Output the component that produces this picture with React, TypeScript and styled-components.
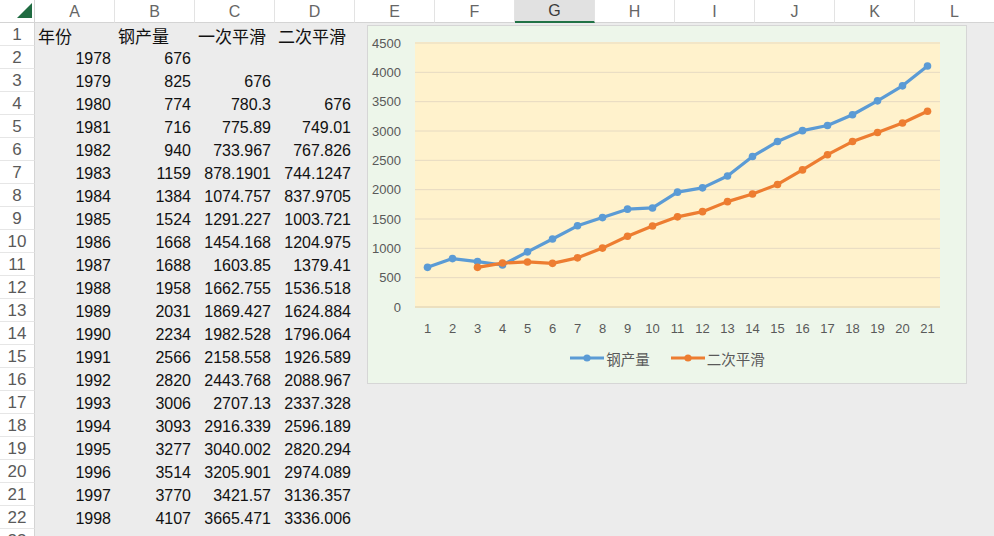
import styled, { createGlobalStyle } from "styled-components";

const GlobalStyle = createGlobalStyle`
  html, body {
    margin: 0;
    background: #ececec;
    overflow: hidden;
  }
  body {
    font-family: "Liberation Sans", "Noto Sans CJK SC", sans-serif;
  }
`;

const COLS = ["A", "B", "C", "D", "E", "F", "G", "H", "I", "J", "K", "L"];

const rows: string[][] = [
  ["年份", "钢产量", "一次平滑", "二次平滑"],
  ["1978", "676", "", ""],
  ["1979", "825", "676", ""],
  ["1980", "774", "780.3", "676"],
  ["1981", "716", "775.89", "749.01"],
  ["1982", "940", "733.967", "767.826"],
  ["1983", "1159", "878.1901", "744.1247"],
  ["1984", "1384", "1074.757", "837.9705"],
  ["1985", "1524", "1291.227", "1003.721"],
  ["1986", "1668", "1454.168", "1204.975"],
  ["1987", "1688", "1603.85", "1379.41"],
  ["1988", "1958", "1662.755", "1536.518"],
  ["1989", "2031", "1869.427", "1624.884"],
  ["1990", "2234", "1982.528", "1796.064"],
  ["1991", "2566", "2158.558", "1926.589"],
  ["1992", "2820", "2443.768", "2088.967"],
  ["1993", "3006", "2707.13", "2337.328"],
  ["1994", "3093", "2916.339", "2596.189"],
  ["1995", "3277", "3040.002", "2820.294"],
  ["1996", "3514", "3205.901", "2974.089"],
  ["1997", "3770", "3421.57", "3136.357"],
  ["1998", "4107", "3665.471", "3336.006"],
  ["", "", "", ""],
];

const Sheet = styled.div`
  position: relative;
  display: grid;
  grid-template-columns: 35px repeat(12, 80px);
  grid-template-rows: 23px;
  grid-auto-rows: 23px;
  width: 995px;
`;

const Corner = styled.div`
  background: #fff;
  border-right: 1px solid #d4d4d4;
  border-bottom: 1px solid #d4d4d4;
  box-sizing: border-box;
  display: flex;
  align-items: flex-end;
  justify-content: flex-end;
  padding: 0 2px 4px 0;
`;

const ColHead = styled.div<{ $active?: boolean }>`
  background: ${(p) => (p.$active ? "#e1e1e1" : "#fff")};
  border-right: 1px solid #e3e3e3;
  border-bottom: ${(p) => (p.$active ? "2px solid #217346" : "1px solid #d4d4d4")};
  box-sizing: border-box;
  display: flex;
  align-items: center;
  justify-content: center;
  font-size: 16px;
  color: ${(p) => (p.$active ? "#3a3a3a" : "#666")};
  padding-top: 1px;
`;

const RowHead = styled.div`
  background: #fff;
  border-right: 1px solid #d4d4d4;
  border-bottom: 1px solid #e6e6e6;
  box-sizing: border-box;
  display: flex;
  align-items: center;
  justify-content: center;
  font-size: 17px;
  color: #5a5a5a;
  padding-top: 2px;
`;

const Cell = styled.div<{ $left?: boolean }>`
  display: flex;
  align-items: center;
  justify-content: ${(p) => (p.$left ? "flex-start" : "flex-end")};
  padding: 2px 4px 0 3px;
  font-size: ${(p) => (p.$left ? "17px" : "16px")};
  color: #111;
  white-space: nowrap;
  overflow: visible;
`;

const ChartBox = styled.div`
  position: absolute;
  left: 367px;
  top: 25px;
  width: 600px;
  height: 359px;
  box-sizing: border-box;
  background: #edf6ea;
  border: 1px solid #d6d6d6;
  display: flex;
  flex-direction: column;
`;

const Legend = styled.div`
  display: flex;
  justify-content: center;
  align-items: center;
  gap: 20px;
  height: 30px;
  margin-top: -1px;
`;

const LegendItem = styled.div`
  display: flex;
  align-items: center;
  gap: 1px;
  font-family: "Noto Sans CJK SC", sans-serif;
  font-size: 14.5px;
  color: #595959;
`;

const BLUE = "#5b9bd5";
const ORANGE = "#ed7d31";

const steel = [676, 825, 774, 716, 940, 1159, 1384, 1524, 1668, 1688, 1958, 2031, 2234, 2566, 2820, 3006, 3093, 3277, 3514, 3770, 4107];
const smooth2 = [676, 749.01, 767.826, 744.1247, 837.9705, 1003.721, 1204.975, 1379.41, 1536.518, 1624.884, 1796.064, 1926.589, 2088.967, 2337.328, 2596.189, 2820.294, 2974.089, 3136.357, 3336.006];

const PL = 47;
const PW = 525;
const PT = 17;
const PH = 264;
const xAt = (i: number) => PL + (i + 0.5) * (PW / 21);
const yAt = (v: number) => PT + PH - (v / 4500) * PH;

const Series = ({ data, start, color }: { data: number[]; start: number; color: string }) => {
  const pts = data.map((v, i) => [xAt(i + start), yAt(v)]);
  return (
    <g>
      <polyline
        points={pts.map((p) => p.join(",")).join(" ")}
        fill="none"
        stroke={color}
        strokeWidth={3.2}
        strokeLinejoin="round"
        strokeLinecap="round"
      />
      {pts.map((p, i) => (
        <circle key={i} cx={p[0]} cy={p[1]} r={3.8} fill={color} />
      ))}
    </g>
  );
};

const LegendMark = ({ color }: { color: string }) => (
  <svg width="36" height="10" viewBox="0 0 36 10">
    <line x1="1" y1="5" x2="35" y2="5" stroke={color} strokeWidth="3.2" />
    <circle cx="18" cy="5" r="3.6" fill={color} />
  </svg>
);

const Chart = () => {
  const ticks = [0, 500, 1000, 1500, 2000, 2500, 3000, 3500, 4000, 4500];
  return (
    <ChartBox>
      <svg width="598" height="318" viewBox="0 0 598 318">
        <rect x={PL} y={PT - 1} width={PW} height={PH + 2} fill="#fff2cc" />
        {ticks.map((t) => (
          <g key={t}>
            <line
              x1={PL}
              x2={PL + PW}
              y1={yAt(t)}
              y2={yAt(t)}
              stroke={t === 0 ? "#d8cdb2" : "#e6dac2"}
              strokeWidth={1}
            />
            <text
              x={33}
              y={yAt(t) + 4.5}
              textAnchor="end"
              fontSize="13"
              fontFamily="Liberation Sans, sans-serif"
              fill="#595959"
            >
              {t}
            </text>
          </g>
        ))}
        {steel.map((_, i) => (
          <text
            key={i}
            x={xAt(i)}
            y={307}
            textAnchor="middle"
            fontSize="13"
            fontFamily="Liberation Sans, sans-serif"
            fill="#595959"
          >
            {i + 1}
          </text>
        ))}
        <Series data={steel} start={0} color={BLUE} />
        <Series data={smooth2} start={2} color={ORANGE} />
      </svg>
      <Legend>
        <LegendItem>
          <LegendMark color={BLUE} />
          钢产量
        </LegendItem>
        <LegendItem>
          <LegendMark color={ORANGE} />
          二次平滑
        </LegendItem>
      </Legend>
    </ChartBox>
  );
};

export default function App() {
  return (
    <>
      <GlobalStyle />
      <Sheet>
        <Corner>
          <svg width="15" height="15" viewBox="0 0 15 15">
            <polygon points="0,15 15,15 15,0" fill="#1f6b41" />
          </svg>
        </Corner>
        {COLS.map((c) => (
          <ColHead key={c} $active={c === "G"}>
            {c}
          </ColHead>
        ))}
        {rows.map((r, ri) => (
          <>
            <RowHead key={`h${ri}`}>{ri + 1}</RowHead>
            {COLS.map((_, ci) => (
              <Cell key={`${ri}-${ci}`} $left={ri === 0}>
                {ci < 4 ? r[ci] : ""}
              </Cell>
            ))}
          </>
        ))}
        <Chart />
      </Sheet>
    </>
  );
}
